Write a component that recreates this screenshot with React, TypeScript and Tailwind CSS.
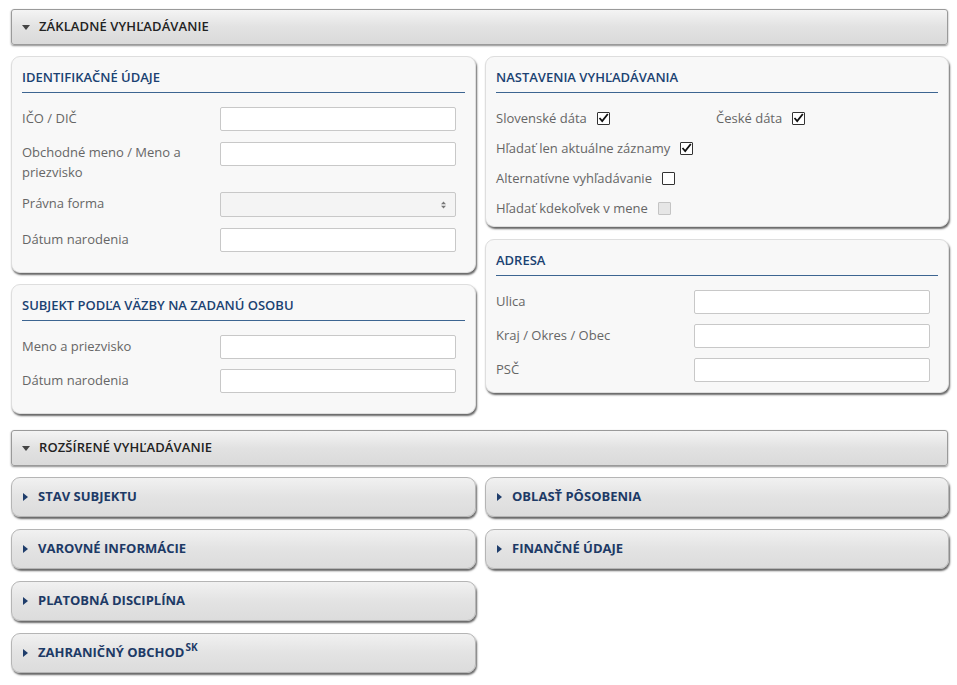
import React from "react";

const font = { fontFamily: '"Open Sans", "Noto Sans", sans-serif' };

function CaretDown() {
  return (
    <svg width="8" height="5" viewBox="0 0 8 5" className="shrink-0">
      <path d="M0 0 L8 0 L4 5 Z" fill="#444" />
    </svg>
  );
}

function CaretRight() {
  return (
    <svg width="5" height="8" viewBox="0 0 5 8" className="shrink-0">
      <path d="M0 0 L5 4 L0 8 Z" fill="#1f3d6b" />
    </svg>
  );
}

function Header({ title }: { title: string }) {
  return (
    <div className="h-[36px] flex items-center gap-[9px] pl-[10px] border border-[#9a9a9a] rounded-[3px] bg-gradient-to-b from-[#f4f4f4] via-[#e2e2e2] to-[#dadada] shadow-[0_1px_2px_rgba(0,0,0,0.45)]">
      <CaretDown />
      <span className="text-[13px] font-semibold text-[#222] tracking-[0.1px]">{title}</span>
    </div>
  );
}

function Collapsed({ title, sup }: { title: string; sup?: string }) {
  return (
    <div className="h-[40px] flex items-center gap-[10px] pl-[11px] border border-[#b5b5b5] rounded-[9px] bg-gradient-to-b from-[#f1f1f1] via-[#e3e3e3] to-[#dcdcdc] shadow-[1px_2px_2px_rgba(0,0,0,0.6)]">
      <CaretRight />
      <span className="text-[13px] font-bold text-[#1d3a66]">
        {title}
        {sup && <span className="text-[10px] ml-[1px] relative top-[-6px]">{sup}</span>}
      </span>
    </div>
  );
}

function Panel({ title, children, pb }: { title: string; children: React.ReactNode; pb: string }) {
  return (
    <div className={`border border-[#dedede] rounded-[9px] bg-[#f8f8f8] pt-[12px] px-[10px] shadow-[1px_2px_2px_rgba(0,0,0,0.6)] ${pb}`}>
      <div className="text-[13px] leading-[16px] font-semibold text-[#1b4272] pb-[7px] border-b border-[#3d6591]">{title}</div>
      {children}
    </div>
  );
}

function Input({ select }: { select?: boolean }) {
  if (select) {
    return (
      <div className="w-[236px] h-[25px] border border-[#c8c8c8] rounded-[2px] bg-[#f4f4f4] flex items-center justify-end pr-[9px]">
        <svg width="5" height="8" viewBox="0 0 5 8">
          <path d="M0 3.2 L2.5 0.5 L5 3.2 Z M0 4.8 L2.5 7.5 L5 4.8 Z" fill="#777" />
        </svg>
      </div>
    );
  }
  return <div className="w-[236px] h-[24px] border border-[#c8c8c8] rounded-[2px] bg-white" />;
}

function Row({ label, select }: { label: React.ReactNode; select?: boolean }) {
  return (
    <div className="flex items-start">
      <div className="w-[198px] shrink-0 text-[13px] leading-[20px] text-[#666] pt-[1px] pr-[10px]">{label}</div>
      <Input select={select} />
    </div>
  );
}

function Check({ label, checked, disabled }: { label: string; checked?: boolean; disabled?: boolean }) {
  return (
    <div className="flex items-center gap-[10px] h-[20px]">
      <span className="text-[13px] leading-[20px] text-[#666]">{label}</span>
      <span
        className={`w-[13px] h-[13px] border flex items-center justify-center rounded-[1px] ${
          disabled ? "border-[#c4c4c4] bg-[#e6e6e6]" : "border-[#333] bg-white"
        }`}
      >
        {checked && (
          <svg width="11" height="10" viewBox="0 0 11 10">
            <path d="M1.5 5 L4.2 8 L9.8 1" stroke="#111" strokeWidth="1.8" fill="none" />
          </svg>
        )}
      </span>
    </div>
  );
}

export default function App() {
  return (
    <div style={font} className="w-[957px] min-h-[685px] bg-white pt-[9px] pl-[11px] pr-[9px]">
      <Header title="ZÁKLADNÉ VYHĽADÁVANIE" />
      <div className="grid grid-cols-[465px_464px] gap-x-[9px] mt-[11px] items-start">
        <div className="flex flex-col gap-[11px]">
          <Panel title="IDENTIFIKAČNÉ ÚDAJE" pb="pb-[20px]">
            <div className="flex flex-col gap-[11px] mt-[14px]">
              <Row label="IČO / DIČ" />
              <div className="flex items-start">
                <div className="w-[198px] shrink-0 text-[13px] leading-[20px] text-[#666] pr-[10px]">
                  Obchodné meno / Meno a priezvisko
                </div>
                <Input />
              </div>
              <div className="-mt-[1px]"><Row label="Právna forma" select /></div>
              <Row label="Dátum narodenia" />
            </div>
          </Panel>
          <Panel title="SUBJEKT PODĽA VÄZBY NA ZADANÚ OSOBU" pb="pb-[20px]">
            <div className="flex flex-col gap-[10px] mt-[14px]">
              <Row label="Meno a priezvisko" />
              <Row label="Dátum narodenia" />
            </div>
          </Panel>
        </div>
        <div className="flex flex-col gap-[12px]">
          <Panel title="NASTAVENIA VYHĽADÁVANIA" pb="pb-[8px]">
            <div className="mt-[15px] flex flex-col gap-[10px]">
              <div className="grid grid-cols-[220px_1fr]">
                <Check label="Slovenské dáta" checked />
                <Check label="České dáta" checked />
              </div>
              <Check label="Hľadať len aktuálne záznamy" checked />
              <Check label="Alternatívne vyhľadávanie" />
              <Check label="Hľadať kdekoľvek v mene" disabled />
            </div>
          </Panel>
          <Panel title="ADRESA" pb="pb-[10px]">
            <div className="flex flex-col gap-[10px] mt-[14px]">
              <Row label="Ulica" />
              <Row label="Kraj / Okres / Obec" />
              <Row label="PSČ" />
            </div>
          </Panel>
        </div>
      </div>
      <div className="mt-[16px]">
        <Header title="ROZŠÍRENÉ VYHĽADÁVANIE" />
      </div>
      <div className="grid grid-cols-[465px_464px] gap-x-[9px] mt-[11px] items-start">
        <div className="flex flex-col gap-[12px]">
          <Collapsed title="STAV SUBJEKTU" />
          <Collapsed title="VAROVNÉ INFORMÁCIE" />
          <Collapsed title="PLATOBNÁ DISCIPLÍNA" />
          <Collapsed title="ZAHRANIČNÝ OBCHOD" sup="SK" />
        </div>
        <div className="flex flex-col gap-[12px]">
          <Collapsed title="OBLASŤ PÔSOBENIA" />
          <Collapsed title="FINANČNÉ ÚDAJE" />
        </div>
      </div>
    </div>
  );
}
